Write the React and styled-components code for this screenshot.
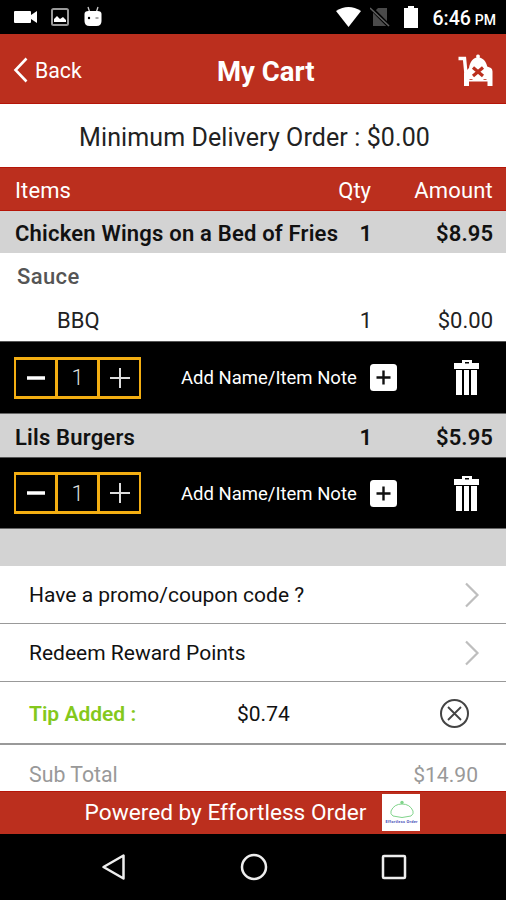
import React from 'react';
import styled, { createGlobalStyle } from 'styled-components';

const RED = '#bb2f1e';

const GlobalStyle = createGlobalStyle`
  * { box-sizing: border-box; }
  body { margin: 0; background: #000; font-family: Roboto, "Liberation Sans", sans-serif; }
  svg { display: block; flex: none; }
  button { border: 0; padding: 0; background: none; color: inherit; font: inherit; letter-spacing: inherit; }
`;

const Screen = styled.main`
  width: 506px;
  height: 900px;
  display: flex;
  flex-direction: column;
  overflow: hidden;
  background: #fff;
`;

const Label = styled.span`
  font-size: ${(p) => p.$size || 22}px;
  font-weight: ${(p) => p.$weight || 400};
  letter-spacing: ${(p) => p.$track || 0}px;
  color: ${(p) => p.$color || 'inherit'};
  line-height: 1.2;
  white-space: nowrap;
`;

const StatusBar = styled.div`
  height: 34px;
  display: flex;
  align-items: center;
  justify-content: space-between;
  padding: 0 10px 0 14px;
  background: #000;
  color: #fff;
`;

const StatusGroup = styled.div`
  display: flex;
  align-items: center;
  gap: ${(p) => p.$gap}px;
`;

const Clock = styled.div`
  display: flex;
  align-items: baseline;
  gap: 4px;
  padding-top: 4px;
`;

const Header = styled.header`
  height: 70px;
  display: grid;
  grid-template-columns: 217px 1fr auto;
  align-items: center;
  padding: 3px 12px 0 0;
  background: ${RED};
  border-bottom: 1px solid #b51508;
  color: #fff;
`;

const BackButton = styled.button`
  display: flex;
  align-items: center;
  gap: 7px;
  padding-left: 13px;
`;

const BackText = styled(Label)`
  padding-top: 2px;
`;

const Title = styled(Label)`
  padding-top: 3px;
`;

const CartButton = styled.button`
  justify-self: end;
`;

const MinimumOrder = styled.div`
  height: 63px;
  display: flex;
  align-items: center;
  justify-content: center;
  padding: 5px 0 0 3px;
  color: #222;
`;

const Row = styled.div`
  display: grid;
  grid-template-columns: 1fr 34px 121px;
  align-items: center;
  padding: 0 13px 0 15px;
`;

const ColumnHeads = styled(Row)`
  height: 44px;
  padding-top: 5px;
  background: ${RED};
  border-top: 1px solid #b51508;
  border-bottom: 1px solid #b51508;
  color: #fff;
`;

const ItemRow = styled(Row)`
  height: ${(p) => p.$height}px;
  padding-top: 5px;
  background: #d3d3d3;
  color: #111;
`;

const OptionTitle = styled.div`
  height: 45px;
  display: flex;
  align-items: center;
  padding: 3px 0 0 17px;
`;

const OptionRow = styled(Row)`
  height: 43px;
  padding-left: 57px;
  padding-top: 3px;
  color: #222;
`;

const RightCell = styled.div`
  display: flex;
  justify-content: flex-end;
  padding-right: ${(p) => p.$inset || 0}px;
`;

const Controls = styled.div`
  height: ${(p) => p.$height}px;
  display: flex;
  align-items: center;
  background: #000;
  border-top: 1px solid #555;
  border-bottom: 1px solid #666;
  color: #fff;
  padding: 0 26px 0 14px;
`;

const Stepper = styled.div`
  width: 127px;
  height: 42px;
  display: grid;
  grid-template-columns: repeat(3, 1fr);
  gap: 3px;
  padding: 3px 2px;
  background: #f3ae12;
`;

const StepCell = styled.div`
  display: flex;
  align-items: center;
  justify-content: center;
  background: #000;
  color: #ddd;
`;

const StepValue = styled(Label)`
  padding-top: 2px;
`;

const NoteButton = styled.button`
  display: flex;
  align-items: center;
  gap: 13px;
  margin-left: 40px;
`;

const NoteText = styled(Label)`
  width: 176px;
  padding-top: 2px;
  text-align: left;
`;

const DeleteButton = styled.button`
  margin-left: auto;
`;

const Gap = styled.div`
  height: 37px;
  background: #d3d3d3;
`;

const ListRow = styled.div`
  height: ${(p) => p.$height}px;
  display: flex;
  align-items: center;
  justify-content: space-between;
  padding: 0 26px 0 29px;
  border-bottom: ${(p) => p.$line || 1}px solid #999;
  color: #111;
`;

const ListText = styled(Label)`
  padding-top: 3px;
`;

const TipRow = styled(ListRow)`
  display: grid;
  grid-template-columns: 208px 1fr auto;
  padding: 1px 36px 0 29px;
`;

const TotalRow = styled.div`
  height: 46px;
  display: flex;
  justify-content: space-between;
  padding: 17px 28px 0 29px;
  color: #999;
  overflow: hidden;
`;

const Footer = styled.footer`
  height: 43px;
  display: flex;
  align-items: center;
  justify-content: center;
  gap: 16px;
  padding-right: 1px;
  background: ${RED};
  border-top: 1px solid #b51508;
  color: #fff;
`;

const Brand = styled.div`
  width: 38px;
  height: 37px;
  margin-bottom: 2px;
  background: #fff;
  display: flex;
  align-items: center;
  justify-content: center;
`;

const NavBar = styled.nav`
  height: 66px;
  display: flex;
  align-items: center;
  justify-content: space-between;
  padding: 0 99px 0 101px;
  background: #000;
`;

const Trash = () => (
  <svg width="26" height="37" viewBox="0 0 26 37">
    <path d="M8 4V1h10v3h7v6H0V4zM11 3v1.500h4V3z" fill="#fff" fillRule="evenodd" />
    <path d="M2 11h6v25H2zM10 11h5v25h-5zM17 11h6v25h-6z" fill="#fff" />
  </svg>
);

const Chevron = () => (
  <svg width="16" height="26" viewBox="0 0 16 26">
    <path d="M2 1.500l11.500 11.500L2 24.500" fill="none" stroke="#bebebe" strokeWidth="2.200" />
  </svg>
);

const CartIcon = () => (
  <svg width="36" height="33" viewBox="0 0 36 33">
    <path d="M0.500 4.500H6.500L8 20" fill="none" stroke="#fff" strokeWidth="3.400" />
    <path d="M20 0.500c1.800 0 2.400 1.600 1.600 3 3.800 1 6.600 4.200 7.600 9l3.800 1.500q1.500 1 1.500 3.500V32h-5v-4.500H11V32H6V19l5-5c.8-5.500 3.600-9.400 7.500-10.500-.8-1.400-.3-3 1.500-3z" fill="#fff" />
    <path d="M15 13.500l10 8.500m0-8.500l-10 8.500" stroke={RED} strokeWidth="3.200" />
    <path d="M11.500 25.500h3M25.500 25.500h3" stroke={RED} strokeWidth="0.800" />
  </svg>
);

function ItemControls({ height }) {
  return (
    <Controls $height={height}>
      <Stepper>
        <StepCell>
          <svg width="18" height="4"><path d="M0 2h18" stroke="#fff" strokeWidth="3.500" /></svg>
        </StepCell>
        <StepCell><StepValue $size={22} $weight={300}>1</StepValue></StepCell>
        <StepCell>
          <svg width="20" height="20"><path d="M0 10h20M10 0v20" stroke="#ddd" strokeWidth="2" /></svg>
        </StepCell>
      </Stepper>
      <NoteButton>
        <NoteText $size={18.5}>Add Name/Item Note</NoteText>
        <svg width="27" height="27" viewBox="0 0 27 27">
          <rect width="27" height="27" rx="3.500" fill="#fff" />
          <path d="M6.500 13.500h14M13.500 6.500v14" stroke="#111" strokeWidth="2.400" />
        </svg>
      </NoteButton>
      <DeleteButton><Trash /></DeleteButton>
    </Controls>
  );
}

function Item({ name, price, height }) {
  return (
    <ItemRow $height={height}>
      <Label $size={22} $weight={600} $track={0.2}>{name}</Label>
      <RightCell><Label $weight={600}>1</Label></RightCell>
      <RightCell><Label $weight={600} $track={0.1}>{price}</Label></RightCell>
    </ItemRow>
  );
}

export default function App() {
  return (
    <>
      <GlobalStyle />
      <Screen>
        <StatusBar>
          <StatusGroup $gap={12.5}>
            <svg width="24" height="14" viewBox="0 0 24 14">
              <path d="M1 1h15q1 0 1 1v3l6-4v12l-6-4v3q0 1-1 1H1q-1 0-1-1V2q0-1 1-1z" fill="#fff" />
            </svg>
            <svg width="18" height="18" viewBox="0 0 18 18">
              <rect x="1" y="1" width="16" height="16" rx="1.500" fill="none" stroke="#999" strokeWidth="2" />
              <path d="M3 14v-3l3-3 3 3 3-2 3 3v2z" fill="#fff" />
            </svg>
            <svg width="24" height="22" viewBox="-1 0 24 22">
              <path d="M6 1l2 6M16 1l-2 6" stroke="#ccc" strokeWidth="1.300" />
              <path d="M2.500 8q0-3 4-3h9q4 0 4 3v7q0 5-5 5h-7q-5 0-5-5z" fill="#fff" />
              <circle cx="7" cy="12" r="1.200" /><path d="M13.500 12h3" stroke="#555" />
            </svg>
          </StatusGroup>
          <StatusGroup $gap={9}>
            <svg width="25" height="20" viewBox="0 0 25 20">
              <path d="M0 4Q12.500-4 25 4L12.500 20z" fill="#fff" />
            </svg>
            <svg width="20" height="20" viewBox="0 0 20 20">
              <path d="M8 1h9v18H3V6z" fill="#4a4a4a" />
              <path d="M0 0l20 20" stroke="#000" strokeWidth="4" /><path d="M0 1l19 18" stroke="#606060" strokeWidth="1.600" />
            </svg>
            <svg width="24" height="22" viewBox="0 0 24 22">
              <path d="M9 0h6v2h4v20H5V2h4z" fill="#fff" />
            </svg>
            <Clock>
              <Label $size={19.5} $weight={500}>6:46</Label>
              <Label $size={14} $weight={500}>PM</Label>
            </Clock>
          </StatusGroup>
        </StatusBar>
        <Header>
          <BackButton>
            <svg width="15" height="26" viewBox="0 0 15 26">
              <path d="M13.500 1.500L2.500 13l11 11.500" fill="none" stroke="#fff" strokeWidth="2.600" />
            </svg>
            <BackText $size={21.3}>Back</BackText>
          </BackButton>
          <Title $size={27.5} $weight={700}>My Cart</Title>
          <CartButton><CartIcon /></CartButton>
        </Header>
        <MinimumOrder><Label $size={25} $track={0.1}>Minimum Delivery Order : $0.00</Label></MinimumOrder>
        <ColumnHeads>
          <Label $size={22} $track={0.1}>Items</Label>
          <RightCell $inset={1}><Label $size={22}>Qty</Label></RightCell>
          <RightCell><Label $size={22} $track={0.2}>Amount</Label></RightCell>
        </ColumnHeads>
        <Item name="Chicken Wings on a Bed of Fries" price="$8.95" height={42} />
        <OptionTitle><Label $weight={500} $track={0.4} $color="#555">Sauce</Label></OptionTitle>
        <OptionRow>
          <Label>BBQ</Label>
          <RightCell><Label>1</Label></RightCell>
          <RightCell><Label>$0.00</Label></RightCell>
        </OptionRow>
        <ItemControls height={73} />
        <Item name="Lils Burgers" price="$5.95" height={43} />
        <ItemControls height={72} />
        <Gap />
        <ListRow $height={58}><ListText $size={21}>Have a promo/coupon code ?</ListText><Chevron /></ListRow>
        <ListRow $height={58}><ListText $size={21}>Redeem Reward Points</ListText><Chevron /></ListRow>
        <TipRow $height={63} $line={2}>
          <ListText $size={21} $weight={600} $color="#84c81c">Tip Added :</ListText>
          <ListText $size={21}>$0.74</ListText>
          <svg width="31" height="31" viewBox="0 0 31 31">
            <circle cx="15.500" cy="15.500" r="13.500" fill="none" stroke="#444" strokeWidth="2" />
            <path d="M9 9l13 13M22 9L9 22" stroke="#444" strokeWidth="1.800" />
          </svg>
        </TipRow>
        <TotalRow><Label $size={21.3}>Sub Total</Label><Label $size={21.1}>$14.90</Label></TotalRow>
        <Footer>
          <Label $size={22.65}>Powered by Effortless Order</Label>
          <Brand>
            <svg width="35" height="36" viewBox="0 0 35 36">
              <path d="M9 22q-3-2-2-5 3-7 11-7t11 7q1 3-2 5-9 3-18 0z" fill="none" stroke="#81d48b" strokeWidth="1" />
              <circle cx="18" cy="8.500" r="1.700" fill="#81d48b" />
              <text x="1.500" y="29" fontSize="4" fontWeight="700" textLength="32" fill="#4a50b8">Effortless Order</text>
            </svg>
          </Brand>
        </Footer>
        <NavBar>
          <svg width="25" height="28" viewBox="0 0 25 28">
            <path d="M22.500 2.500v23L2.500 14z" fill="none" stroke="#eee" strokeWidth="2.500" strokeLinejoin="round" />
          </svg>
          <svg width="28" height="28" viewBox="0 0 28 28">
            <circle cx="14" cy="14" r="12" fill="none" stroke="#eee" strokeWidth="2.500" />
          </svg>
          <svg width="26" height="26" viewBox="0 0 26 26">
            <rect x="2" y="2" width="22" height="22" rx="1" fill="none" stroke="#eee" strokeWidth="2.500" />
          </svg>
        </NavBar>
      </Screen>
    </>
  );
}
